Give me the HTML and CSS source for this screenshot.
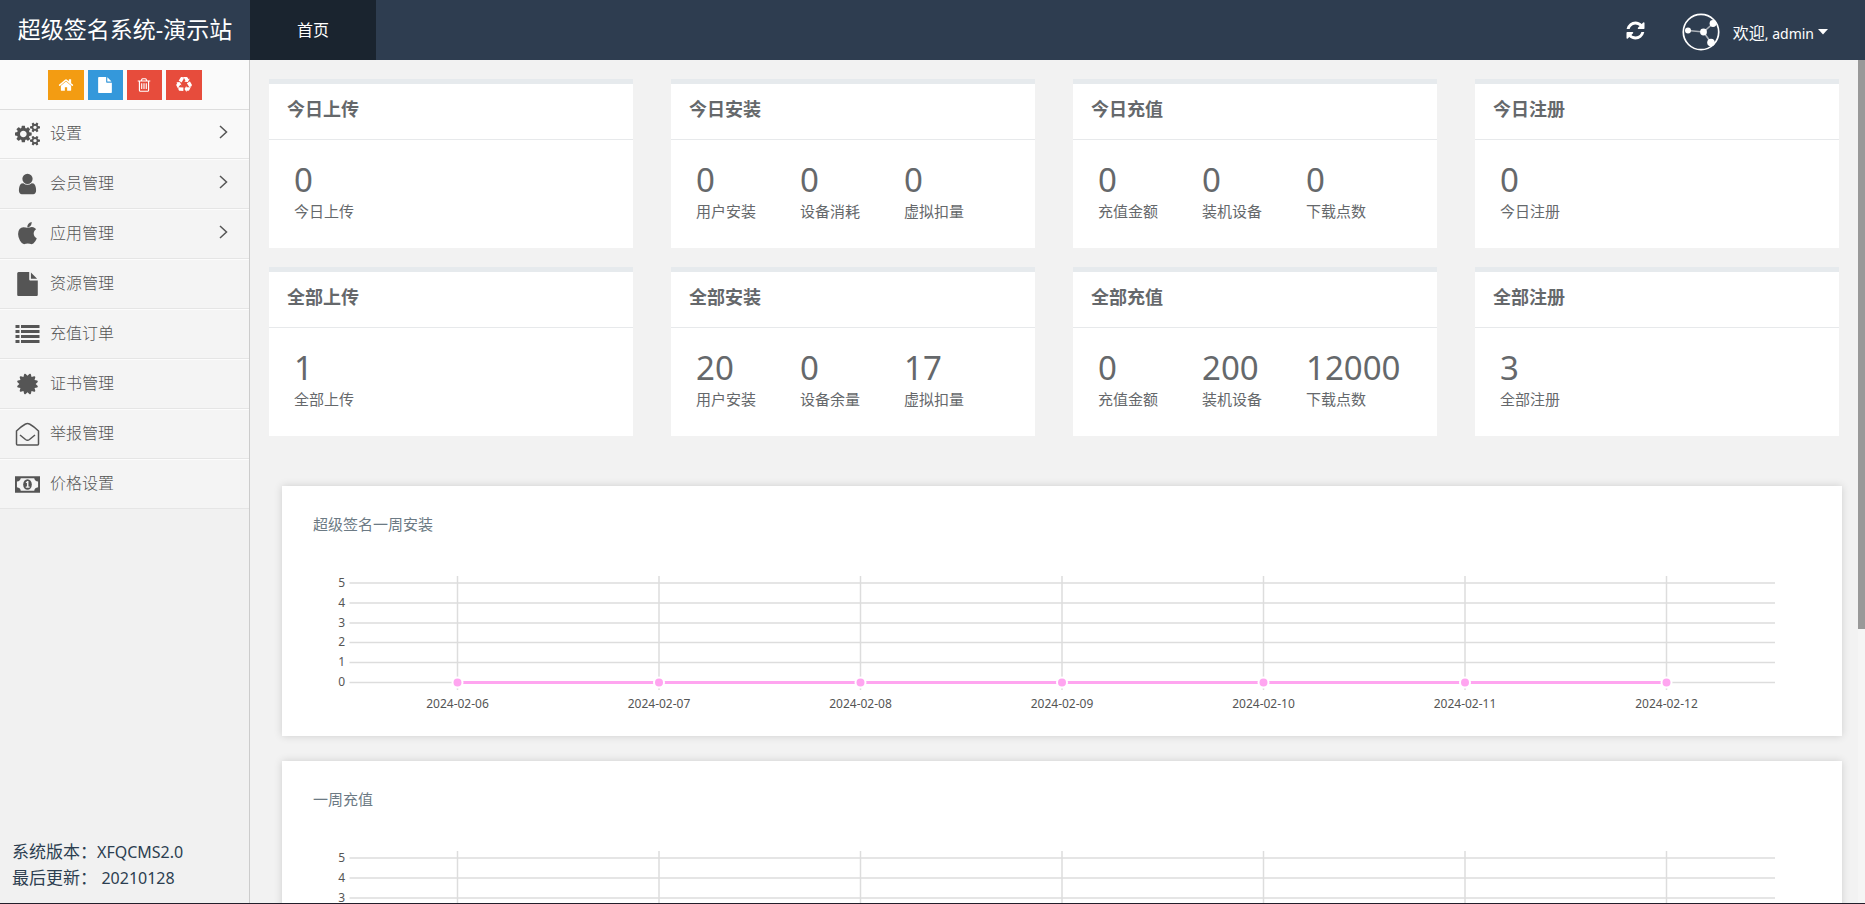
FILE: index.html
```html
<!DOCTYPE html>
<html lang="zh-CN">
<head>
<meta charset="utf-8">
<title>超级签名系统-演示站</title>
<link rel="stylesheet" href="styles.css">
</head>
<body>
<header class="topbar">
  <a class="brand" href="#">超级签名系统-演示站</a>
  <nav class="tabs"><a class="tab" href="#">首页</a></nav>
  <div class="tools">
    <button class="refresh" type="button" aria-label="刷新"><svg viewBox="0 0 1792 1792"><path d="M1639 1056q0 5-1 7-64 268-268 434.5t-478 166.5q-146 0-282.5-55t-243.5-157l-129 129q-19 19-45 19t-45-19-19-45v-448q0-26 19-45t45-19h448q26 0 45 19t19 45-19 45l-137 137q71 66 161 102t187 36q134 0 250-65t186-179q11-17 53-117 8-23 30-23h192q13 0 22.5 9.5t9.5 22.5zm25-800v448q0 26-19 45t-45 19h-448q-26 0-45-19t-19-45 19-45l138-138q-148-137-349-137-134 0-250 65t-186 179q-11 17-53 117-8 23-30 23h-199q-13 0-22.5-9.5t-9.5-22.5v-7q65-268 270-434.5t480-166.5q146 0 284 55.5t245 156.5l130-129q19-19 45-19t45 19 19 45z"/></svg></button>
    <button class="account" type="button">
      <svg class="avatar" viewBox="0 0 38 38"><circle cx="19" cy="19" r="17.7" fill="none" stroke="#fff" stroke-width="1.7"/><path d="M6 17.500L21.500 19L31 10.500M21.500 19L29 29.500" fill="none" stroke="#fff" stroke-opacity=".6" stroke-width="1.600"/><circle cx="6" cy="17.500" r="3"/><circle cx="21.500" cy="19" r="3.400"/><circle cx="31" cy="10.500" r="3.400"/><circle cx="29" cy="29.500" r="3.800"/></svg>
      <span class="welcome">欢迎<span class="user">, admin</span></span>
      <svg class="caret" viewBox="0 0 10 6"><path d="M0 0h10L5 5.500z"/></svg>
    </button>
  </div>
</header>
<div class="body">
  <aside class="sidebar">
    <div class="shortcuts">
      <button class="shortcut orange" type="button" aria-label="主页"><svg viewBox="0 0 1792 1792"><path d="M1472 992v480q0 26-19 45t-45 19h-384v-384h-256v384h-384q-26 0-45-19t-19-45v-480q0-1 .5-3t.5-3l575-474 575 474q1 2 1 6zm223-69l-62 74q-8 9-21 11h-3q-13 0-21-7l-692-577-692 577q-12 8-24 7-13-2-21-11l-62-74q-8-10-7-23.500t11-21.500l719-599q32-26 76-26t76 26l244 204v-195q0-14 9-23t23-9h192q14 0 23 9t9 23v408l219 182q10 8 11 21.500t-7 23.500z"/></svg></button>
      <button class="shortcut blue" type="button" aria-label="文件"><svg viewBox="0 0 1792 1792"><path d="M1152 512v-472q22 14 36 28l408 408q14 14 28 36h-472zm-128 32q0 40 28 68t68 28h544v1056q0 40-28 68t-68 28h-1344q-40 0-68-28t-28-68v-1600q0-40 28-68t68-28h800v544z"/></svg></button>
      <button class="shortcut red" type="button" aria-label="删除"><svg viewBox="0 0 1792 1792"><path d="M704 736v576q0 14-9 23t-23 9h-64q-14 0-23-9t-9-23v-576q0-14 9-23t23-9h64q14 0 23 9t9 23zm256 0v576q0 14-9 23t-23 9h-64q-14 0-23-9t-9-23v-576q0-14 9-23t23-9h64q14 0 23 9t9 23zm256 0v576q0 14-9 23t-23 9h-64q-14 0-23-9t-9-23v-576q0-14 9-23t23-9h64q14 0 23 9t9 23zm128 724v-948h-896v948q0 22 7 40.500t14.500 27 10.500 8.500h832q3 0 10.500-8.500t14.500-27 7-40.500zm-672-1076h448l-48-117q-7-9-17-11h-317q-10 2-17 11zm928 32v64q0 14-9 23t-23 9h-96v948q0 83-47 143.500t-113 60.500h-832q-66 0-113-58.500t-47-141.500v-952h-96q-14 0-23-9t-9-23v-64q0-14 9-23t23-9h309l70-167q15-37 54-63t79-26h320q40 0 79 26t54 63l70 167h309q14 0 23 9t9 23z"/></svg></button>
      <button class="shortcut red" type="button" aria-label="回收"><svg viewBox="0 0 1792 1792"><path d="M836 1169l-15 368-2 22-420-29q-36-3-67-31.500t-47-65.500q-11-27-14.500-55t4-65 12-55 21.500-64 19-53q78 12 509 28zm-387-586l180 379-147-92q-63 72-111.500 144.500t-72.500 125-39.500 94.500-18.500 63l-4 21-190-357q-17-26-18-56t6-47l8-18q35-63 114-188l-140-86zm1231 517l-188 359q-12 29-36.500 46.500t-43.500 20.500l-18 4q-71 7-219 12l8 164-230-367 211-362 7 173q170 16 283 5t170-33zm-785-924q-47 63-265 435l-317-187-19-12 225-356q20-31 60-45t80-10q24 2 48.500 12t42 21 41.500 33 36 34.500 36 39.500 32 35zm655 307l212 363q18 37 12.500 76t-27.500 74q-13 20-33 37t-38 28-48.500 22-47 16-51.500 14-46 12q-34-72-265-436l313-195zm-143-226l142-83-220 373-419-20 151-86q-34-89-75-166t-75.500-123.500-64.500-80-47-46.500l-17-13 405 1q31-3 58 10.500t39 28.500l11 15q39 61 112 190z"/></svg></button>
    </div>
    <nav class="menu">
      <a class="item active" href="#"><svg class="icon" viewBox="0 0 1920 1792"><path d="M896 896q0-106-75-181t-181-75-181 75-75 181 75 181 181 75 181-75 75-181zm768 512q0-52-38-90t-90-38-90 38-38 90q0 53 37.500 90.500t90.500 37.500 90.500-37.500 37.500-90.500zm0-1024q0-52-38-90t-90-38-90 38-38 90q0 53 37.500 90.500t90.500 37.500 90.500-37.500 37.500-90.500zm-384 421v185q0 10-7 19.500t-16 10.500l-155 24q-11 35-32 76 34 48 90 115 7 11 7 20 0 12-7 19-23 30-82.500 89.500t-78.500 59.500q-11 0-21-7l-115-90q-37 19-77 31-11 108-23 155-7 24-30 24h-186q-11 0-20-7.500t-10-17.500l-23-153q-34-10-75-31l-118 89q-7 7-20 7-11 0-21-8-144-133-144-160 0-9 7-19 10-14 41-53t47-61q-23-44-35-82l-152-24q-10-1-17-9.500t-7-19.500v-185q0-10 7-19.500t16-10.500l155-24q11-35 32-76-34-48-90-115-7-11-7-20 0-12 7-20 22-30 82-89t79-59q11 0 21 7l115 90q34-18 77-32 11-108 23-154 7-24 30-24h186q11 0 20 7.500t10 17.500l23 153q34 10 75 31l118-89q8-7 20-7 11 0 21 8 144 133 144 160 0 8-7 19-12 16-42 54t-45 60q23 48 34 82l152 23q10 2 17 10.500t7 19.500zm640 533v140q0 16-149 31-12 27-30 52 51 113 51 138 0 4-4 7-122 71-124 71-8 0-46-47t-52-68q-20 2-30 2t-30-2q-14 21-52 68t-46 47q-2 0-124-71-4-3-4-7 0-25 51-138-18-25-30-52-149-15-149-31v-140q0-16 149-31 13-29 30-52-51-113-51-138 0-4 4-7 4-2 35-20t59-34 30-16q8 0 46 46.500t52 67.500q20-2 30-2t30 2q51-71 92-112l6-2q4 0 124 70 4 3 4 7 0 25-51 138 17 23 30 52 149 15 149 31zm0-1024v140q0 16-149 31-12 27-30 52 51 113 51 138 0 4-4 7-122 71-124 71-8 0-46-47t-52-68q-20 2-30 2t-30-2q-14 21-52 68t-46 47q-2 0-124-71-4-3-4-7 0-25 51-138-18-25-30-52-149-15-149-31v-140q0-16 149-31 13-29 30-52-51-113-51-138 0-4 4-7 4-2 35-20t59-34 30-16q8 0 46 46.500t52 67.500q20-2 30-2t30 2q51-71 92-112l6-2q4 0 124 70 4 3 4 7 0 25-51 138 17 23 30 52 149 15 149 31z"/></svg><span class="label">设置</span><svg class="arrow" viewBox="0 0 9 14"><path d="M1 1l6.500 6L1 13"/></svg></a>
      <a class="item" href="#"><svg class="icon" viewBox="0 0 1792 1792"><path d="M1536 1399q0 109-62.500 187t-150.500 78h-854q-88 0-150.500-78t-62.500-187q0-85 8.500-160.500t31.500-152 58.500-131 94-89 134.500-34.500q131 128 313 128t313-128q76 0 134.500 34.500t94 89 58.500 131 31.500 152 8.500 160.500zm-256-887q0 159-112.500 271.500t-271.500 112.500-271.500-112.500-112.500-271.500 112.500-271.500 271.500-112.500 271.500 112.500 112.500 271.500z"/></svg><span class="label">会员管理</span><svg class="arrow" viewBox="0 0 9 14"><path d="M1 1l6.500 6L1 13"/></svg></a>
      <a class="item" href="#"><svg class="icon" viewBox="0 0 1792 1792"><path d="M1585 1215q-39 125-123 250-129 196-257 196-49 0-140-32-86-32-151-32-61 0-142 33-81 34-132 34-152 0-301-259-147-261-147-503 0-228 113-374 112-144 284-144 72 0 177 30 104 30 138 30 45 0 143-34 102-34 173-34 119 0 213 65 52 36 104 100-79 67-114 118-65 94-65 207 0 124 69 223t158 126zm-376-1173q0 61-29 136-30 75-93 138-54 54-108 72-37 11-104 17 3-149 78-257 74-107 250-148 1 3 2.500 11t2.500 11q0 4 .5 10t.5 10z"/></svg><span class="label">应用管理</span><svg class="arrow" viewBox="0 0 9 14"><path d="M1 1l6.500 6L1 13"/></svg></a>
      <a class="item" href="#"><svg class="icon" viewBox="0 0 1792 1792"><path d="M1152 512v-472q22 14 36 28l408 408q14 14 28 36h-472zm-128 32q0 40 28 68t68 28h544v1056q0 40-28 68t-68 28h-1344q-40 0-68-28t-28-68v-1600q0-40 28-68t68-28h800v544z"/></svg><span class="label">资源管理</span></a>
      <a class="item" href="#"><svg class="icon" viewBox="0 0 24 24"><path d="M0 3h4v3H0zM5.500 3H24v3H5.500zM0 8h4v3H0zM5.500 8H24v3H5.500zM0 13h4v3H0zM5.500 13H24v3H5.500zM0 18h4v3H0zM5.500 18H24v3H5.500z"/></svg><span class="label">充值订单</span></a>
      <a class="item" href="#"><svg class="icon" viewBox="0 0 1792 1792"><path d="M1504 896l138 135q30 28 20 70-12 41-52 51l-188 48 53 186q12 41-19 70-29 31-70 19l-186-53-48 188q-10 40-51 52-12 2-19 2-31 0-51-22l-135-138-135 138q-28 30-70 20-41-11-51-52l-48-188-186 53q-41 12-70-19-31-29-19-70l53-186-188-48q-40-10-52-51-10-42 20-70l138-135-138-135q-30-28-20-70 12-41 52-51l188-48-53-186q-12-41 19-70 29-31 70-19l186 53 48-188q10-41 51-51 41-12 70 19l135 139 135-139q29-30 70-19 41 10 51 51l48 188 186-53q41-12 70 19 31 29 19 70l-53 186 188 48q40 10 52 51 10 42-20 70z"/></svg><span class="label">证书管理</span></a>
      <a class="item" href="#"><svg class="icon" viewBox="0 0 24 24"><path d="M1 22V9Q5.500 4.500 10 2q2-1.200 4 0 4.500 2.500 9 7v13q0 1-1 1H2q-1 0-1-1zM4.500 13l5.500 4.500q2 1.400 4 0l5.500-4.500" fill="none" stroke="#555" stroke-width="1.500"/></svg><span class="label">举报管理</span></a>
      <a class="item" href="#"><svg class="icon" viewBox="0 0 26 24"><path fill-rule="evenodd" d="M0 4h26v17H0zM6 6q-.5 3-4 3.500v6q3.500.5 4 3.500h14q.5-3 4-3.500v-6q-3.500-.5-4-3.500z"/><ellipse cx="13" cy="12.500" rx="4.500" ry="5.500"/><path d="M11 11l1.500-2H14v5.500h1.200V16h-4v-1.500h1.200V11z" fill="#f4f4f4"/></svg><span class="label">价格设置</span></a>
    </nav>
    <footer class="version">
      <div>系统版本：<span class="value">XFQCMS2.0</span></div>
      <div>最后更新： <span class="value">20210128</span></div>
    </footer>
  </aside>
  <main class="content">
    <section class="cards">
      <article class="card"><h2>今日上传</h2><div class="stats"><div class="stat"><b>0</b><span>今日上传</span></div></div></article>
      <article class="card"><h2>今日安装</h2><div class="stats"><div class="stat"><b>0</b><span>用户安装</span></div><div class="stat"><b>0</b><span>设备消耗</span></div><div class="stat"><b>0</b><span>虚拟扣量</span></div></div></article>
      <article class="card"><h2>今日充值</h2><div class="stats"><div class="stat"><b>0</b><span>充值金额</span></div><div class="stat"><b>0</b><span>装机设备</span></div><div class="stat"><b>0</b><span>下载点数</span></div></div></article>
      <article class="card"><h2>今日注册</h2><div class="stats"><div class="stat"><b>0</b><span>今日注册</span></div></div></article>
      <article class="card"><h2>全部上传</h2><div class="stats"><div class="stat"><b>1</b><span>全部上传</span></div></div></article>
      <article class="card"><h2>全部安装</h2><div class="stats"><div class="stat"><b>20</b><span>用户安装</span></div><div class="stat"><b>0</b><span>设备余量</span></div><div class="stat"><b>17</b><span>虚拟扣量</span></div></div></article>
      <article class="card"><h2>全部充值</h2><div class="stats"><div class="stat"><b>0</b><span>充值金额</span></div><div class="stat"><b>200</b><span>装机设备</span></div><div class="stat"><b>12000</b><span>下载点数</span></div></div></article>
      <article class="card"><h2>全部注册</h2><div class="stats"><div class="stat"><b>3</b><span>全部注册</span></div></div></article>
    </section>
    <section class="panel">
      <h3>超级签名一周安装</h3>
      <svg class="chart" viewBox="0 0 1560 180">
        <defs>
          <g id="plot">
            <path class="grid" d="M67.500 27H1493M67.500 47H1493M67.500 67H1493M67.500 86.500H1493M67.500 106.500H1493M67.500 126.500H1493M175.500 20v114M377 20v114M578.500 20v114M780 20v114M981.500 20v114M1183 20v114M1384.500 20v114"/>
            <path class="series" d="M175.500 126.500H1384.500"/>
            <g class="points"><circle cx="175.500" cy="126.500" r="5"/><circle cx="377" cy="126.500" r="5"/><circle cx="578.500" cy="126.500" r="5"/><circle cx="780" cy="126.500" r="5"/><circle cx="981.500" cy="126.500" r="5"/><circle cx="1183" cy="126.500" r="5"/><circle cx="1384.500" cy="126.500" r="5"/></g>
          </g>
        </defs>
        <use href="#plot"/>
        <g class="ylabels"><text x="63" y="31">5</text><text x="63" y="51">4</text><text x="63" y="71">3</text><text x="63" y="90">2</text><text x="63" y="110">1</text><text x="63" y="130">0</text></g>
        <g class="xlabels"><text x="175.500" y="152">2024-02-06</text><text x="377" y="152">2024-02-07</text><text x="578.500" y="152">2024-02-08</text><text x="780" y="152">2024-02-09</text><text x="981.500" y="152">2024-02-10</text><text x="1183" y="152">2024-02-11</text><text x="1384.500" y="152">2024-02-12</text></g>
      </svg>
    </section>
    <section class="panel">
      <h3>一周充值</h3>
      <svg class="chart" viewBox="0 0 1560 180">
        <use href="#plot"/>
        <g class="ylabels"><text x="63" y="31">5</text><text x="63" y="51">4</text><text x="63" y="71">3</text></g>
      </svg>
    </section>
  </main>
  <div class="scroll"><div class="thumb"></div></div>
</div>
</body>
</html>
```
FILE: styles.css
```css
* { box-sizing: border-box; }
body {
  margin: 0;
  height: 100vh;
  display: flex;
  flex-direction: column;
  overflow: hidden;
  border-bottom: 1px solid #231f2b;
  background: #f2f2f2;
  color: #65686b;
  font-family: "Noto Sans", "Noto Sans CJK SC", sans-serif;
  font-size: 15px;
}
a { color: inherit; text-decoration: none; }
button { border: 0; padding: 0; background: none; color: inherit; font: inherit; cursor: pointer; }
svg { display: block; fill: currentColor; }

.topbar { display: flex; flex: 0 0 60px; background: #2e3d50; color: #fff; }
.brand { width: 250px; padding-bottom: 2px; line-height: 58px; font-size: 23px; text-align: center; white-space: nowrap; }
.tab { display: block; padding: 0 47px; line-height: 60px; font-size: 16px; background: #1a242f; }
.tools { display: flex; align-items: center; gap: 36px; margin-left: auto; padding-right: 37px; }
.refresh svg { width: 21px; height: 21px; }
.account { display: flex; align-items: center; padding-top: 3px; }
.avatar { width: 38px; height: 38px; margin-right: 13px; }
.welcome { font-size: 16px; }
.user { font-size: 14px; }
.caret { width: 10px; height: 6px; margin-left: 4px; }

.body { flex: 1; display: flex; min-height: 0; }
.sidebar { display: flex; flex-direction: column; flex: 0 0 250px; background: #f1f1f1; border-right: 1px solid #ccc; color: #555; }
.shortcuts { display: flex; justify-content: center; gap: 4px; padding: 10px 0 9px; background: #fafafa; border-bottom: 1px solid #ddd; }
.shortcut { display: flex; align-items: center; justify-content: center; width: 36px; height: 30px; color: #fff; }
.shortcut.blue, .shortcut.blue + .red { width: 35px; }
.shortcut svg { width: 16px; height: 16px; }
.orange { background: #f39c12; }
.blue { background: #3498db; }
.red { background: #e74c3c; }
.item { display: flex; align-items: center; height: 50px; padding: 0 21px 4px 15px; background: #f4f4f4; border-top: 1px solid #fcfcfc; border-bottom: 1px solid #e5e5e5; }
.item.active { height: 49px; background: #f9f9f9; border-top: 0; }
.icon { width: 25px; height: 24px; margin: 4px 10px 0 0; }
.label { flex: 1; font-size: 16px; font-weight: 300; }
.arrow { width: 9px; height: 14px; fill: none; stroke: #555; stroke-width: 1.5; }
.version { margin-top: auto; padding: 0 12px 12px; color: #2c3e50; font-size: 17px; line-height: 25px; }
.value { font-size: 16px; }

.content { flex: 1; min-width: 0; overflow: hidden; }
.cards { display: grid; grid-template-columns: repeat(4, 1fr); gap: 19px 38px; padding: 19px; }
.card { background: #fff; border-top: 5px solid #e6eaed; }
.card h2 { margin: 0; padding: 0 18px 4px; line-height: 51px; font-size: 18px; font-weight: 700; border-bottom: 1px solid #e7e9eb; }
.stats { display: flex; padding: 20px 25px 25px; }
.stat { flex: 0 0 104px; }
.stat b { display: block; font-size: 33px; line-height: 39px; font-weight: 400; }
.stat span { display: block; font-size: 15px; line-height: 24px; }

.panel { margin: 0 16px 25px 32px; height: 250px; background: #fff; box-shadow: 0 0 8px rgba(0, 0, 0, .15); }
.cards + .panel { margin-top: 31px; }
.panel h3 { margin: 0; padding: 25px 31px 19px; line-height: 26px; font-size: 15px; font-weight: 400; color: #6c7a84; }
.chart { width: 100%; }
.grid { fill: none; stroke: #ddd; stroke-width: 1.5; }
.series { fill: none; stroke: #ffa5f0; stroke-width: 3; }
.points { fill: #ffa5f0; stroke: #fff; stroke-width: 2; }
.ylabels { font-size: 12px; text-anchor: end; fill: #555; }
.xlabels { font-size: 12px; text-anchor: middle; fill: #555; }

.scroll { flex: 0 0 7px; background: #f5f5f5; }
.thumb { height: 67.5%; background: #999; }
```
